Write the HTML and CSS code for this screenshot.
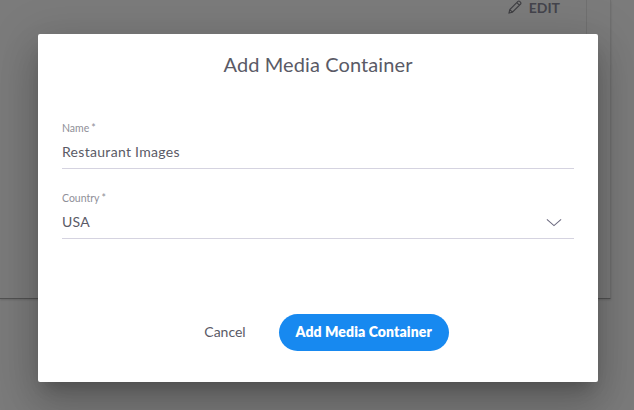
FILE: index.html
```html
<!DOCTYPE html>
<html lang="en">
<head>
<meta charset="utf-8">
<title>Add Media Container</title>
<link rel="stylesheet" href="styles.css">
</head>
<body>
<div class="page">
  <div class="panel">
    <div class="panel-main">
      <button class="edit" type="button">
        <svg class="edit-icon" width="14" height="14" viewBox="0 0 14 14" fill="none" stroke="currentColor" stroke-width="1.1"><path d="M1 13l.8-3.4L10 1.4a1.2 1.2 0 0 1 1.7 0l.9.9a1.2 1.2 0 0 1 0 1.7L4.4 12.2 1 13zM1.8 9.6l2.6 2.6M8.8 2.6l2.6 2.6"/></svg>
        <span>EDIT</span>
      </button>
    </div>
  </div>
</div>
<div class="overlay">
  <div class="modal">
    <h1 class="modal-title">Add Media Container</h1>
    <div class="field field-name">
      <label class="field-label">Name<span class="req">*</span></label>
      <div class="field-value">Restaurant Images</div>
    </div>
    <div class="field field-country">
      <label class="field-label">Country<span class="req">*</span></label>
      <div class="field-value">USA
        <svg class="chevron" width="18" height="10" viewBox="0 0 18 10" fill="none" stroke="currentColor" stroke-width="1.2"><path d="M1 1.5l8 7 8-7"/></svg>
      </div>
    </div>
    <div class="actions">
      <button class="btn-cancel" type="button">Cancel</button>
      <button class="btn-primary" type="button">Add Media Container</button>
    </div>
  </div>
</div>
</body>
</html>
```
FILE: styles.css
```css
html, body {
  margin: 0;
  padding: 0;
  width: 634px;
  height: 410px;
  overflow: hidden;
  font-family: "Lato", "Open Sans", sans-serif;
}
body { position: relative; background: #7b7b7b; }
.page { height: 410px; }
.panel {
  width: 611px;
  height: 299px;
  box-sizing: border-box;
  border-right: 1px solid #6f6f6f;
  border-bottom: 1px solid #525252;
  box-shadow: 0 1px 2px rgba(0,0,0,.15);
}
.panel-main {
  width: 587px;
  height: 100%;
  box-sizing: border-box;
  border-right: 1px solid #707070;
  display: flex;
  justify-content: flex-end;
  align-items: flex-start;
  padding: 0 26px 0 0;
}
.edit {
  display: flex;
  align-items: center;
  gap: 7px;
  border: 0;
  background: none;
  padding: 0;
  margin: 0;
  height: 14px;
  color: #44444c;
  font: 700 14px "Lato", sans-serif;
}
.edit-icon { color: #3e3e42; }
.overlay {
  position: absolute;
  inset: 0;
  padding: 34px 36px 28px 38px;
}
.modal {
  width: 560px;
  height: 348px;
  box-sizing: border-box;
  background: #fff;
  border-radius: 2px;
  padding: 18px 24px 0;
  box-shadow: 0 11px 15px -7px rgba(0,0,0,.2), 0 24px 38px 3px rgba(0,0,0,.14), 0 9px 46px 8px rgba(0,0,0,.12);
  display: flex;
  flex-direction: column;
}
.modal-title {
  margin: 0;
  font-size: 20px;
  line-height: 24px;
  font-weight: 400;
  letter-spacing: .1px;
  text-align: center;
  color: #5a5a66;
}
.field { border-bottom: 1px solid #d5d3e0; box-sizing: border-box; }
.field-name { margin-top: 46px; height: 47px; }
.field-country { margin-top: 23px; height: 47px; }
.field-label {
  display: block;
  font-size: 10.5px;
  line-height: 12px;
  color: #8f8f98;
}
.req { margin-left: 2px; }
.field-value {
  display: flex;
  justify-content: space-between;
  align-items: center;
  margin-top: 8px;
  font-size: 14px;
  line-height: 20px;
  letter-spacing: .3px;
  color: #5a5a66;
}
.chevron { width: 16px; height: 9px; color: #6d6b80; margin: 0 12px 0 0; }
.actions {
  display: flex;
  justify-content: center;
  align-items: center;
  gap: 33px;
  margin-top: 75px;
  padding-left: 17px;
}
.btn-cancel {
  border: 0;
  background: none;
  padding: 0 0 3px;
  font: 400 14px "Lato", sans-serif;
  color: #5a5a66;
}
.btn-primary {
  width: 170px;
  height: 37px;
  border: 0;
  border-radius: 19px;
  background: #1789f0;
  color: #fff;
  padding: 0 0 3px;
  font: 800 14px "Lato", sans-serif;
  letter-spacing: .1px;
}
```
